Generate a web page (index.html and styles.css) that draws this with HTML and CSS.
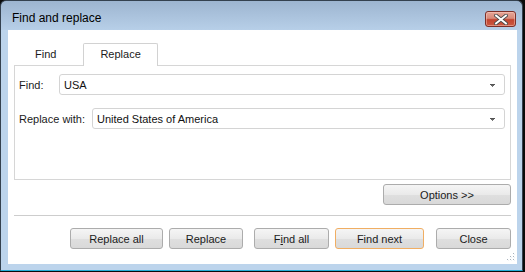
FILE: index.html
```html
<!DOCTYPE html>
<html>
<head>
<meta charset="utf-8">
<link rel="stylesheet" href="styles.css">
</head>
<body>
<div class="window">
  <div class="titlebar">
    <span class="title">Find and replace</span>
    <button class="close" aria-label="Close">
      <svg width="14" height="11" viewBox="0 0 14 11">
        <path d="M2 1.5 L12 9.5 M12 1.5 L2 9.5" stroke="#4a4a4a" stroke-width="3.6" stroke-linecap="square" fill="none"/>
        <path d="M2 1.5 L12 9.5 M12 1.5 L2 9.5" stroke="#ffffff" stroke-width="1.9" stroke-linecap="square" fill="none"/>
      </svg>
    </button>
  </div>
  <div class="client">
    <div class="tabs">
      <div class="tab">Find</div>
      <div class="tab tab--active">Replace</div>
    </div>
    <div class="panel">
      <div class="row">
        <span class="label label--find">Find:</span>
        <div class="combo"><span>USA</span><svg class="arrow" width="5" height="3" viewBox="0 0 5 3"><rect x="0" y="0" width="5" height="1" fill="#555"/><rect x="1" y="1" width="3" height="1" fill="#666"/><rect x="2" y="2" width="1" height="1" fill="#777"/></svg></div>
      </div>
      <div class="row">
        <span class="label label--replace">Replace with:</span>
        <div class="combo"><span>United States of America</span><svg class="arrow" width="5" height="3" viewBox="0 0 5 3"><rect x="0" y="0" width="5" height="1" fill="#555"/><rect x="1" y="1" width="3" height="1" fill="#666"/><rect x="2" y="2" width="1" height="1" fill="#777"/></svg></div>
      </div>
    </div>
    <div class="options-row">
      <button class="btn btn--options">Options &gt;&gt;</button>
    </div>
    <div class="separator"></div>
    <div class="actions">
      <button class="btn btn--replace-all">Replace all</button>
      <button class="btn btn--replace">Replace</button>
      <button class="btn btn--find-all">F<u>i</u>nd all</button>
      <button class="btn btn--find-next">Find next</button>
      <button class="btn btn--close">Close</button>
    </div>
    <svg class="grip" width="10" height="10" viewBox="0 0 10 10">
      <rect x="8" y="0" width="1" height="1" fill="#a9b3bd"/>
      <rect x="5" y="3" width="1" height="1" fill="#a9b3bd"/>
      <rect x="8" y="3" width="1" height="1" fill="#a9b3bd"/>
      <rect x="2" y="6" width="1" height="1" fill="#a9b3bd"/>
      <rect x="5" y="6" width="1" height="1" fill="#a9b3bd"/>
      <rect x="8" y="6" width="1" height="1" fill="#a9b3bd"/>
      <rect x="9" y="1" width="1" height="1" fill="#eef2f5"/>
      <rect x="6" y="4" width="1" height="1" fill="#eef2f5"/>
      <rect x="9" y="4" width="1" height="1" fill="#eef2f5"/>
      <rect x="3" y="7" width="1" height="1" fill="#eef2f5"/>
      <rect x="6" y="7" width="1" height="1" fill="#eef2f5"/>
      <rect x="9" y="7" width="1" height="1" fill="#eef2f5"/>
    </svg>
  </div>
</div>
</body>
</html>
```

FILE: styles.css
```css
* {
  box-sizing: border-box;
}

body {
  margin: 0;
  background: #0b0b0b;
  font-family: "Liberation Sans", Arial, sans-serif;
  font-size: 11px;
  color: #1b1b1b;
}

.window {
  width: 523px;
  height: 271px;
  display: flex;
  flex-direction: column;
  border: 1px solid #34414f;
  border-bottom-color: #22aed6;
  border-radius: 6px 6px 0 0;
  background: linear-gradient(#9db5d0, #b7cfe8 29px, #bcd4ec 29px);
  overflow: hidden;
}

.titlebar {
  flex: none;
  height: 29px;
  display: flex;
  align-items: flex-start;
  justify-content: space-between;
}

.title {
  padding: 10px 0 0 11px;
  font-size: 12px;
  line-height: 15px;
  color: #000;
}

.close {
  margin: 10px 6px 0 0;
  width: 31px;
  height: 16px;
  padding: 0;
  border: 1px solid #7d2f28;
  border-radius: 3px;
  background: linear-gradient(#e6a697, #d88a7a 45%, #c2442f 55%, #cb5a43);
  box-shadow: inset 0 0 0 1px rgba(255, 210, 200, 0.45);
  display: flex;
  align-items: center;
  justify-content: center;
}

.close svg {
  display: block;
}

.client {
  flex: 1;
  margin: 0 5px 6px 7px;
  padding: 6px;
  background: #fff;
  display: flex;
  flex-direction: column;
  position: relative;
}

.tabs {
  display: flex;
  align-items: flex-end;
  gap: 10px;
  padding: 7px 0 0 4px;
  position: relative;
  z-index: 1;
}

.tab {
  height: 22px;
  line-height: 21px;
  padding: 0 16px;
  border: 1px solid transparent;
  border-bottom: 0;
  border-radius: 2px 2px 0 0;
  color: #1b1b1b;
}

.tab--active {
  height: 23px;
  margin-bottom: -1px;
  border-color: #d2d2d2;
  background: #fff;
}

.panel {
  flex: none;
  height: 115px;
  border: 1px solid #d6d6d6;
  padding: 8px 5px 0 4px;
  display: flex;
  flex-direction: column;
  gap: 13px;
}

.row {
  display: flex;
  align-items: center;
}

.label {
  flex: none;
}

.label--find {
  width: 40px;
}

.label--replace {
  width: 73px;
}

.combo {
  flex: 1;
  height: 21px;
  border: 1px solid #d4d4d4;
  border-radius: 3px;
  padding: 0 9px 0 4px;
  display: flex;
  align-items: center;
  justify-content: space-between;
  color: #111;
}

.arrow {
  display: block;
  margin-top: 1px;
}

.options-row {
  display: flex;
  justify-content: flex-end;
  margin-top: 4px;
}

.btn {
  height: 21px;
  padding: 0;
  border: 1px solid #acacac;
  border-radius: 3px;
  background: linear-gradient(#f5f5f5, #eaeaea 50%, #dfdfdf 52%, #d9d9d9);
  font: inherit;
  color: #1b1b1b;
}

.btn--options {
  width: 128px;
}

.separator {
  height: 1px;
  margin-top: 10px;
  background: #cdcdcd;
}

.actions {
  display: flex;
  justify-content: flex-end;
  margin-top: 12px;
}

.btn--replace-all {
  width: 93px;
}

.btn--replace {
  width: 74px;
  margin-left: 6px;
}

.btn--find-all {
  width: 75px;
  margin-left: 11px;
}

.btn--find-next {
  width: 89px;
  margin-left: 6px;
  border-color: #f0ae63;
}

.btn--close {
  width: 75px;
  margin-left: 12px;
}

.grip {
  position: absolute;
  right: 2px;
  bottom: 1px;
}
```
